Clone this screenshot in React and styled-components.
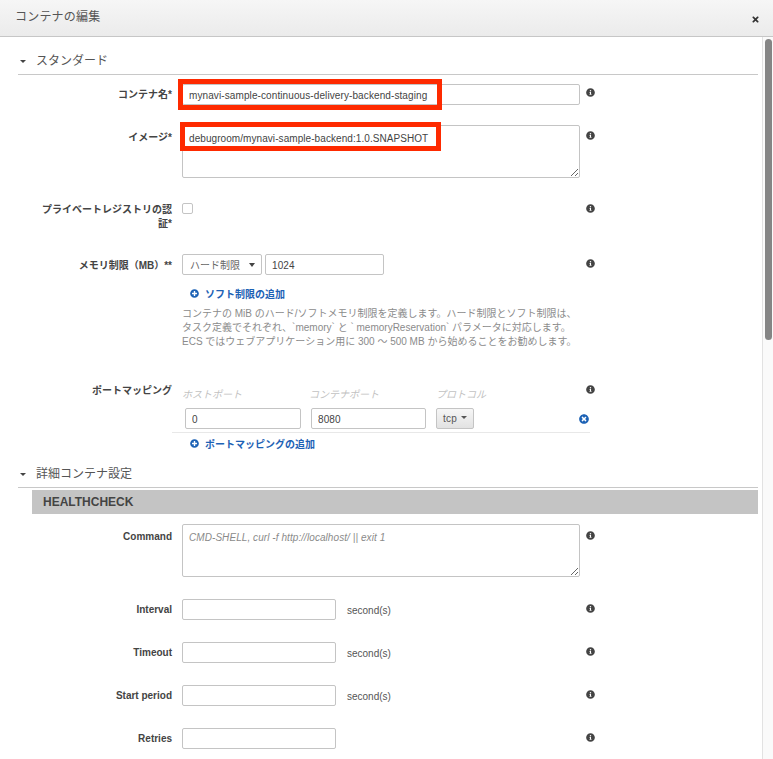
import React from "react";
import styled, { createGlobalStyle } from "styled-components";
import { FaInfoCircle, FaPlusCircle, FaTimes, FaTimesCircle } from "react-icons/fa";

const GlobalStyle = createGlobalStyle`
  html, body {
    margin: 0;
    padding: 0;
    background: #fff;
    overflow: hidden;
  }
  body, input, textarea, button {
    font-family: "Liberation Sans", "Noto Sans CJK JP", sans-serif;
    color: #444;
  }
  * {
    box-sizing: border-box;
  }
`;

const Modal = styled.div`
  width: 773px;
  height: 759px;
  display: flex;
  flex-direction: column;
  overflow: hidden;
`;

const Header = styled.div`
  height: 37px;
  flex: none;
  display: flex;
  align-items: center;
  justify-content: space-between;
  padding: 0 13px 0 15px;
  background: linear-gradient(#f6f6f6, #ebebeb);
  border-bottom: 1px solid #c6c6c6;
`;

const HeaderTitle = styled.span`
  font-size: 12px;
  color: #555;
  letter-spacing: 0.2px;
  margin-bottom: 5px;
`;

const CloseIcon = styled(FaTimes)`
  font-size: 9px;
  color: #333;
  margin-top: 2px;
`;

const BodyWrap = styled.div`
  flex: 1;
  display: flex;
  min-height: 0;
`;

const Content = styled.div`
  width: 762px;
  flex: none;
  padding: 16px 4px 0 18px;
  overflow: hidden;
`;

const ScrollTrack = styled.div`
  flex: 1;
  background: #fafafa;
  border-left: 1px solid #e2e2e2;
  padding: 2px 1px 0 2px;
`;

const ScrollThumb = styled.div`
  height: 301px;
  background: #858585;
  border-radius: 4px;
`;

const SectionHead = styled.div`
  height: 22px;
  display: flex;
  align-items: flex-start;
  padding-left: 2px;
  margin-bottom: ${(p) => p.$gap ?? 0}px;
  border-bottom: 1px solid #c8c8c8;
  font-size: 12px;
  line-height: 16px;
  color: #555;
`;

const Caret = styled.span`
  width: 0;
  height: 0;
  margin: 7px 10px 0 0;
  border-left: 3px solid transparent;
  border-right: 3px solid transparent;
  border-top: 3px solid #444;
`;

const FormRow = styled.div`
  display: flex;
  align-items: flex-start;
  height: ${(p) => p.$height}px;
`;

const Label = styled.div`
  width: 131px;
  flex: none;
  margin-left: 23px;
  padding-top: ${(p) => p.$top ?? 4}px;
  text-align: right;
  font-size: 10px;
  font-weight: 700;
  line-height: ${(p) => p.$line ?? 15}px;
  color: #444;
`;

const Field = styled.div`
  position: relative;
  width: 398px;
  flex: none;
  margin-left: 10px;
`;

const TextInput = styled.input`
  display: block;
  width: ${(p) => p.$width ?? "100%"};
  height: 21px;
  padding: 2px 6px 0;
  border: 1px solid #c4c4c4;
  border-radius: 2px;
  background: #fff;
  font-size: 10px;
  letter-spacing: 0.1px;
  color: #444;
  outline: none;
`;

const TextArea = styled.textarea`
  display: block;
  width: 100%;
  height: 53px;
  padding: 6px;
  border: 1px solid #c4c4c4;
  border-radius: 2px;
  font-size: 10px;
  letter-spacing: 0.07px;
  line-height: 13px;
  color: #444;
  outline: none;
  &::placeholder {
    color: #8a8a8a;
    font-style: italic;
  }
`;

const Highlight = styled.div`
  position: absolute;
  left: ${(p) => p.$left}px;
  top: ${(p) => p.$top}px;
  width: ${(p) => p.$width}px;
  height: ${(p) => p.$height}px;
  border: 5px solid #fe2a00;
  pointer-events: none;
`;

const InfoSlot = styled.div`
  margin-left: 6px;
  padding-top: ${(p) => p.$top ?? 4}px;
  line-height: 0;
`;

const InfoIcon = styled(FaInfoCircle)`
  font-size: 9px;
  color: #444;
`;

const Checkbox = styled.span`
  display: block;
  width: 11px;
  height: 11px;
  border: 1px solid #c4c4c4;
  border-radius: 2px;
  background: #fff;
`;

const InlineRow = styled.div`
  display: flex;
  align-items: center;
  gap: ${(p) => p.$gap ?? 0}px;
`;

const SelectBox = styled.div`
  width: 80px;
  height: 21px;
  display: flex;
  align-items: center;
  justify-content: space-between;
  padding: 0 6px 0 7px;
  border: 1px solid #c4c4c4;
  border-radius: 2px;
  font-size: 10px;
  color: #666;
`;

const SelectCaret = styled.span`
  width: 0;
  height: 0;
  border-left: 3.5px solid transparent;
  border-right: 3.5px solid transparent;
  border-top: 4px solid #444;
`;

const AddLink = styled.div`
  display: flex;
  align-items: center;
  gap: 6px;
  height: 14px;
  margin: ${(p) => p.$margin};
  font-size: 10px;
  font-weight: 700;
  color: #1d62b5;
`;

const AddIcon = styled(FaPlusCircle)`
  font-size: 9px;
  color: #1d62b5;
`;

const HelpText = styled.div`
  margin-top: 7px;
  width: 400px;
  font-size: 10px;
  line-height: 14px;
  color: #8b8b8b;
  white-space: nowrap;
`;

const PortHeads = styled.div`
  display: flex;
  height: 25px;
  padding-top: 5px;
  font-size: 10px;
  line-height: 14px;
  font-style: italic;
  color: #c2c2c2;
`;

const PortHead = styled.span`
  width: ${(p) => p.$width}px;
  flex: none;
`;

const PortRow = styled.div`
  display: flex;
  align-items: center;
  gap: 10px;
  height: 25px;
  margin-left: -10px;
  width: 418px;
  padding: 0 0 4px 13px;
  border-bottom: 1px solid #e8e8e8;
  position: relative;
`;

const TcpButton = styled.div`
  width: 38px;
  height: 21px;
  display: flex;
  align-items: center;
  justify-content: center;
  gap: 4px;
  border: 1px solid #c4c4c4;
  border-radius: 2px;
  background: linear-gradient(#f6f6f6, #e2e2e2);
  font-size: 10px;
  letter-spacing: 0.3px;
  color: #555;
`;

const TcpCaret = styled.span`
  width: 0;
  height: 0;
  margin-bottom: 2px;
  border-left: 3px solid transparent;
  border-right: 3px solid transparent;
  border-top: 3px solid #555;
`;

const RemoveIcon = styled(FaTimesCircle)`
  position: absolute;
  right: 1px;
  top: 6px;
  font-size: 10px;
  color: #1d62b5;
`;

const Band = styled.div`
  height: 24px;
  margin: 2px 0 10px 14px;
  padding-left: 11px;
  background: #c4c4c4;
  font-size: 12px;
  font-weight: 700;
  line-height: 24px;
  color: #444;
`;

const Unit = styled.span`
  padding-top: 1px;
  font-size: 10px;
  color: #555;
`;

const SecondsRow = ({ label, unit = true }) => (
  <FormRow $height={43}>
    <Label $top={3}>{label}</Label>
    <Field>
      <InlineRow $gap={11}>
        <TextInput $width="154px" readOnly />
        {unit && <Unit>second(s)</Unit>}
      </InlineRow>
    </Field>
    <InfoSlot $top={5}>
      <InfoIcon />
    </InfoSlot>
  </FormRow>
);

const App = () => {
  return (
    <Modal>
      <GlobalStyle />
      <Header>
        <HeaderTitle>コンテナの編集</HeaderTitle>
        <CloseIcon />
      </Header>
      <BodyWrap>
        <Content>
          <SectionHead $gap={9}>
            <Caret />
            スタンダード
          </SectionHead>

          <FormRow $height={41}>
            <Label $top={3}>コンテナ名*</Label>
            <Field>
              <TextInput readOnly value="mynavi-sample-continuous-delivery-backend-staging" />
              <Highlight $left={-4} $top={-5} $width={264} $height={31} />
            </Field>
            <InfoSlot>
              <InfoIcon />
            </InfoSlot>
          </FormRow>

          <FormRow $height={78}>
            <Label $top={5}>イメージ*</Label>
            <Field>
              <TextArea readOnly value="debugroom/mynavi-sample-backend:1.0.SNAPSHOT" />
              <Highlight $left={-2} $top={-3} $width={261} $height={29} />
            </Field>
            <InfoSlot $top={6}>
              <InfoIcon />
            </InfoSlot>
          </FormRow>

          <FormRow $height={51}>
            <Label $top={0} $line={14}>プライベートレジストリの認証*</Label>
            <Field>
              <Checkbox />
            </Field>
            <InfoSlot $top={1}>
              <InfoIcon />
            </InfoSlot>
          </FormRow>

          <FormRow $height={129}>
            <Label>メモリ制限（MB）**</Label>
            <Field>
              <InlineRow $gap={3}>
                <SelectBox>
                  ハード制限
                  <SelectCaret />
                </SelectBox>
                <TextInput $width="119px" readOnly value="1024" />
              </InlineRow>
              <AddLink $margin="11px 0 0 8px">
                <AddIcon />
                ソフト制限の追加
              </AddLink>
              <HelpText>
                コンテナの MiB のハード/ソフトメモリ制限を定義します。ハード制限とソフト制限は、
                <br />
                タスク定義でそれぞれ、`memory` と ` memoryReservation` パラメータに対応します。
                <br />
                ECS ではウェブアプリケーション用に 300 〜 500 MB から始めることをお勧めします。
              </HelpText>
            </Field>
            <InfoSlot $top={5}>
              <InfoIcon />
            </InfoSlot>
          </FormRow>

          <FormRow $height={83}>
            <Label $top={0}>ポートマッピング</Label>
            <Field>
              <PortHeads>
                <PortHead $width={127}>ホストポート</PortHead>
                <PortHead $width={127}>コンテナポート</PortHead>
                <PortHead $width={60}>プロトコル</PortHead>
              </PortHeads>
              <PortRow>
                <TextInput $width="116px" readOnly value="0" />
                <TextInput $width="115px" readOnly value="8080" />
                <TcpButton>
                  tcp
                  <TcpCaret />
                </TcpButton>
                <RemoveIcon />
              </PortRow>
              <AddLink $margin="3px 0 0 8px">
                <AddIcon />
                ポートマッピングの追加
              </AddLink>
            </Field>
            <InfoSlot $top={2}>
              <InfoIcon />
            </InfoSlot>
          </FormRow>

          <SectionHead>
            <Caret />
            詳細コンテナ設定
          </SectionHead>
          <Band>HEALTHCHECK</Band>

          <FormRow $height={75}>
            <Label $top={5}>Command</Label>
            <Field>
              <TextArea readOnly placeholder="CMD-SHELL, curl -f http://localhost/ || exit 1" />
            </Field>
            <InfoSlot $top={7}>
              <InfoIcon />
            </InfoSlot>
          </FormRow>

          <SecondsRow label="Interval" />
          <SecondsRow label="Timeout" />
          <SecondsRow label="Start period" />
          <SecondsRow label="Retries" unit={false} />
        </Content>
        <ScrollTrack>
          <ScrollThumb />
        </ScrollTrack>
      </BodyWrap>
    </Modal>
  );
};

export default App;
